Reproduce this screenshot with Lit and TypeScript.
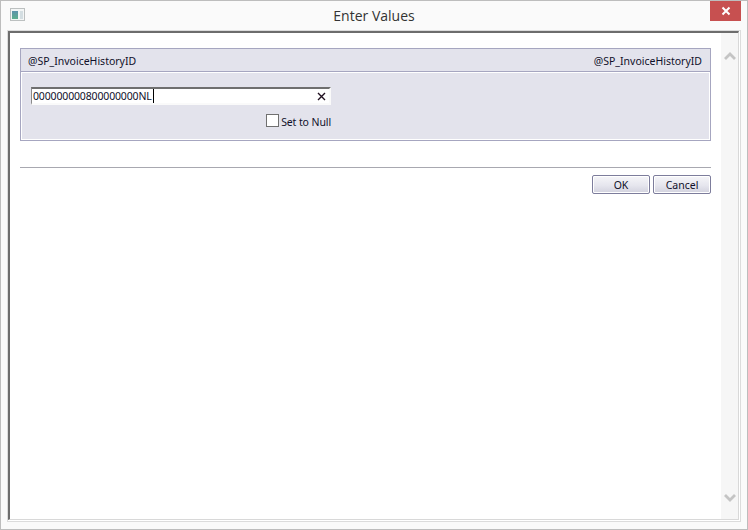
import { LitElement, html, css } from "lit";
import { customElement } from "lit/decorators.js";

@customElement("app-root")
export class AppRoot extends LitElement {
  static styles = css`
    :host { display: block; width: 748px; height: 530px; box-sizing: border-box; background: #fafafa; border: 1px solid #bdbdbd; font-family: "Noto Sans", sans-serif; font-size: 10.5px; color: #10102a; overflow: hidden; }
    .titlebar { height: 29px; display: grid; grid-template-columns: 1fr auto 1fr; align-items: start; }
    .appicon { margin: 7px 0 0 9px; display: block; }
    .title { font-family: "Open Sans", sans-serif; font-size: 14px; line-height: 16px; margin-top: 7px; color: #333; }
    .right { display: flex; justify-content: flex-end; }
    .close { width: 31px; height: 20px; margin-right: 6px; background: #c75050; display: flex; align-items: center; justify-content: center; }
    .frame { width: 734px; height: 492px; margin-left: 6px; box-sizing: border-box; border: 1px solid #dcdcdc; background: #fff; padding: 0 1px 1px 0; }
    .inner { height: 100%; box-sizing: border-box; display: flex; border-top: 2px solid #6d6d6d; border-left: 2px solid #6d6d6d; border-right: 1px solid #d8d8d8; border-bottom: 1px solid #d8d8d8; }
    .content { flex: 1; padding: 15px 10px 0 10px; min-width: 0; }
    .scroll { width: 17px; background: #f6f6f6; display: flex; flex-direction: column; justify-content: space-between; align-items: center; padding: 19px 0 17px; box-sizing: border-box; }
    .panel { border: 1px solid #a6a6c0; background: #e3e3ec; }
    .phead { box-sizing: border-box; display: flex; justify-content: space-between; align-items: center; padding: 2px 8px 0 7px; border-bottom: 1px solid #a6a6c0; height: 23px; }
    .pbody { height: 68px; border: 1px solid #fff; padding: 14px 0 0 9px; box-sizing: border-box; }
    .input { width: 300px; height: 18px; box-sizing: border-box; background: #fff; border: 2px solid #fafafa; border-top: 2px solid #6f6f6f; border-left: 1px solid #8b8b8b; display: flex; align-items: center; justify-content: space-between; padding: 0 3px 0 1px; line-height: 14px; }
    .val { display: flex; align-items: center; letter-spacing: -0.15px; }
    .caret { width: 1px; height: 14px; background: #000; margin-left: 1px; }
    .nullrow { width: 300px; display: flex; justify-content: flex-end; align-items: center; gap: 2px; margin-top: 7px; height: 16px; }
    .nulltext { margin-top: 3px; letter-spacing: -0.1px; }
    .check { width: 11px; height: 11px; border: 1px solid #707070; background: #fff; }
    .rule { height: 1px; background: #a8a8b0; margin-top: 26px; }
    .buttons { display: flex; justify-content: flex-end; gap: 3px; margin-top: 7px; }
    .btn { width: 58px; height: 19px; box-sizing: border-box; border: 1px solid #7d7d9c; border-radius: 2px; background: linear-gradient(#f6f6f9, #e6e6ee 55%, #d2d2de); box-shadow: inset 0 0 0 1px #fff; font: inherit; color: #10102a; padding: 1px 0 0; }
  `;
  render() {
    return html`
      <div class="titlebar">
        <svg class="appicon" width="15" height="13" viewBox="0 0 15 13">
          <defs><linearGradient id="g" x1="0" y1="0" x2="0" y2="1"><stop offset="0" stop-color="#5f93ac"/><stop offset="1" stop-color="#5fb08e"/></linearGradient></defs>
          <rect x="0.5" y="0.5" width="14" height="12" fill="#f4f6f6" stroke="#bcc0c0"/>
          <rect x="2" y="3" width="6" height="8" fill="url(#g)"/>
          <rect x="10" y="3" width="3" height="8" fill="#d4dee2"/>
        </svg>
        <div class="title">Enter Values</div>
        <div class="right"><div class="close">
          <svg width="10" height="10" viewBox="0 0 10 10"><path d="M1.5 1.5L8.5 8.5M8.5 1.5L1.5 8.5" stroke="#fff" stroke-width="2"/></svg>
        </div></div>
      </div>
      <div class="frame"><div class="inner">
        <div class="content">
          <div class="panel">
            <div class="phead"><span>@SP_InvoiceHistoryID</span><span>@SP_InvoiceHistoryID</span></div>
            <div class="pbody">
              <div class="input">
                <span class="val">000000000800000000NL<span class="caret"></span></span>
                <svg width="9" height="9" viewBox="0 0 9 9"><path d="M1 1L8 8M8 1L1 8" stroke="#201020" stroke-width="1.4"/></svg>
              </div>
              <div class="nullrow"><span class="check"></span><span class="nulltext">Set to Null</span></div>
            </div>
          </div>
          <div class="rule"></div>
          <div class="buttons"><button class="btn">OK</button><button class="btn">Cancel</button></div>
        </div>
        <div class="scroll">
          <svg width="12" height="8" viewBox="0 0 12 8"><path d="M1 7L6 2L11 7" fill="none" stroke="#c4c4c4" stroke-width="2.8"/></svg>
          <svg width="12" height="8" viewBox="0 0 12 8"><path d="M1 1L6 6L11 1" fill="none" stroke="#c4c4c4" stroke-width="2.8"/></svg>
        </div>
      </div></div>
    `;
  }
}
